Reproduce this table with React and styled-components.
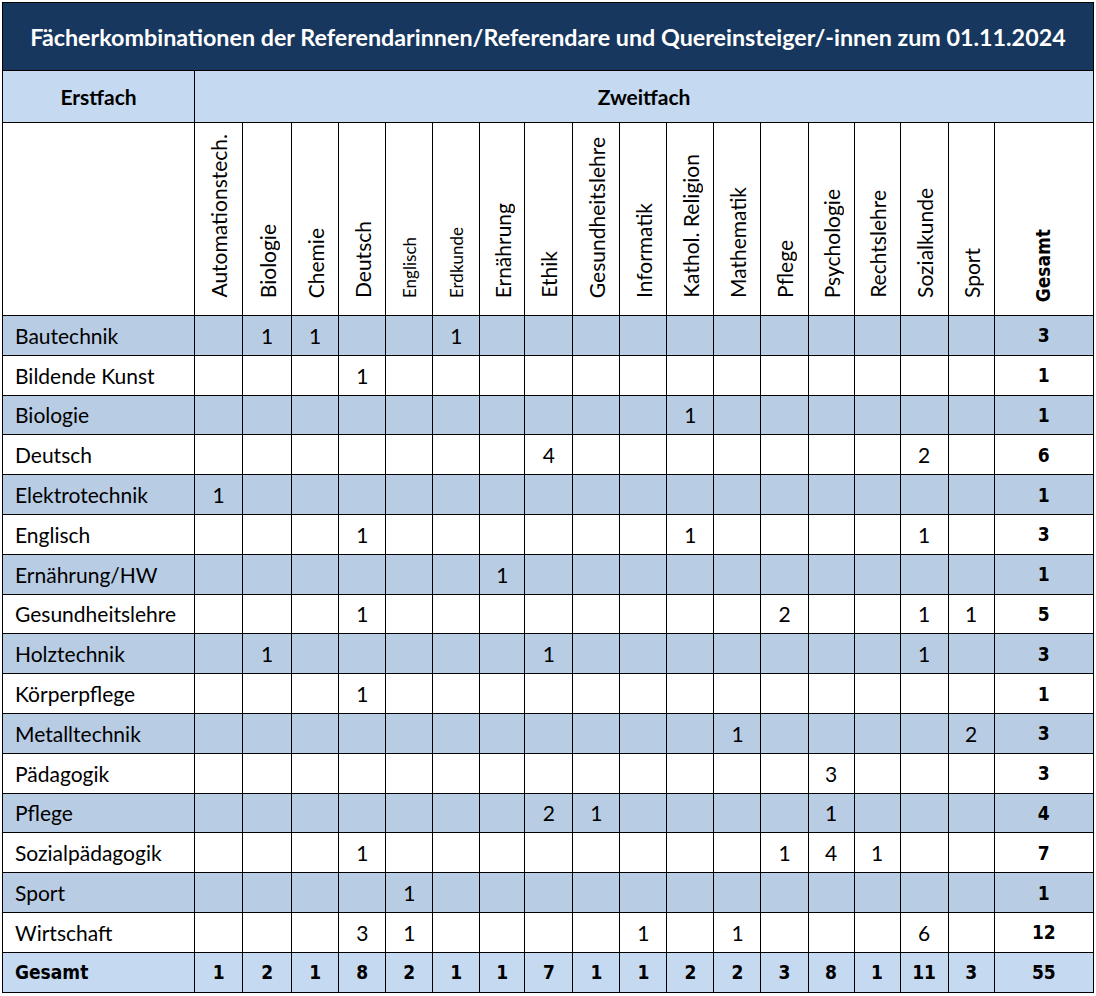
import React from "react";
import styled, { createGlobalStyle, css } from "styled-components";

const GlobalStyle = createGlobalStyle`
  html, body { margin: 0; padding: 0; background: #ffffff; }
  body { font-family: Lato, "Open Sans", sans-serif; color: #000; }
`;

const Page = styled.div`
  padding: 2px 0 0 2px;
`;

const Table = styled.table`
  border-collapse: collapse;
  table-layout: fixed;
  width: 1092px;
  border: 1px solid #000;
  font-family: Lato, "Open Sans", sans-serif;
`;

const narrowBold = css`
  font-family: "Liberation Sans Narrow", "DejaVu Sans Condensed", "Liberation Sans", sans-serif;
  font-weight: 700;
  font-size: 19px;
`;

const TitleCell = styled.th`
  height: 67px;
  background: #17375e;
  color: #ffffff;
  font-size: 23.3px;
  font-weight: 700;
  text-align: center;
  border: 1px solid #000;
  padding: 0;
  white-space: nowrap;
`;

const GroupCell = styled.th`
  height: 51px;
  background: #c5d9f1;
  font-size: 21px;
  font-weight: 700;
  text-align: center;
  border: 1px solid #000;
  padding: 0;
`;

const BlankHead = styled.th`
  height: 192px;
  background: #fff;
  border: 1px solid #000;
  padding: 0;
`;

const VertHead = styled.th`
  background: #fff;
  border: 1px solid #000;
  padding: 0 0 ${(p) => (p.$bold ? "10px" : "14px")} 0;
  vertical-align: bottom;
  text-align: center;
`;

const VertText = styled.span`
  display: inline-block;
  writing-mode: vertical-rl;
  transform: rotate(180deg);
  white-space: nowrap;
  font-size: ${(p) => (p.$small ? "17px" : "21px")};
  font-weight: 400;
  line-height: 1;
  ${(p) => p.$bold && narrowBold}
`;

const Row = styled.tr`
  height: 39.8px;
  background: ${(p) => p.$bg};
`;

const LabelCell = styled.td`
  border: 1px solid #000;
  padding: 0 0 0 12px;
  font-size: 21px;
  white-space: nowrap;
  ${(p) => p.$bold && narrowBold}
`;

const NumCell = styled.td`
  border: 1px solid #000;
  padding: 0;
  text-align: center;
  font-size: 21px;
  ${(p) => p.$bold && narrowBold}
`;

const columns = [
  { name: "Automationstech." },
  { name: "Biologie" },
  { name: "Chemie" },
  { name: "Deutsch" },
  { name: "Englisch", small: true },
  { name: "Erdkunde", small: true },
  { name: "Ernährung" },
  { name: "Ethik" },
  { name: "Gesundheitslehre" },
  { name: "Informatik" },
  { name: "Kathol. Religion" },
  { name: "Mathematik" },
  { name: "Pflege" },
  { name: "Psychologie" },
  { name: "Rechtslehre" },
  { name: "Sozialkunde" },
  { name: "Sport" },
];

const colWidths = [48, 49, 47, 47, 47, 47, 45, 48, 47, 47, 47, 47, 47, 46, 46, 48, 46];

const rows = [
  ["Bautechnik", { 1: 1, 2: 1, 5: 1 }],
  ["Bildende Kunst", { 3: 1 }],
  ["Biologie", { 10: 1 }],
  ["Deutsch", { 7: 4, 15: 2 }],
  ["Elektrotechnik", { 0: 1 }],
  ["Englisch", { 3: 1, 10: 1, 15: 1 }],
  ["Ernährung/HW", { 6: 1 }],
  ["Gesundheitslehre", { 3: 1, 12: 2, 15: 1, 16: 1 }],
  ["Holztechnik", { 1: 1, 7: 1, 15: 1 }],
  ["Körperpflege", { 3: 1 }],
  ["Metalltechnik", { 11: 1, 16: 2 }],
  ["Pädagogik", { 13: 3 }],
  ["Pflege", { 7: 2, 8: 1, 13: 1 }],
  ["Sozialpädagogik", { 3: 1, 12: 1, 13: 4, 14: 1 }],
  ["Sport", { 4: 1 }],
  ["Wirtschaft", { 3: 3, 4: 1, 9: 1, 11: 1, 15: 6 }],
];

export default function App() {
  const colTotals = columns.map((_, i) =>
    rows.reduce((s, [, v]) => s + (v[i] || 0), 0)
  );
  const grand = colTotals.reduce((a, b) => a + b, 0);

  return (
    <Page>
      <GlobalStyle />
      <Table>
        <colgroup>
          <col style={{ width: 192 }} />
          {colWidths.map((w, i) => (
            <col key={i} style={{ width: w }} />
          ))}
          <col style={{ width: 99 }} />
        </colgroup>
        <thead>
          <tr>
            <TitleCell colSpan={19}>
              Fächerkombinationen der Referendarinnen/Referendare und Quereinsteiger/-innen zum 01.11.2024
            </TitleCell>
          </tr>
          <tr>
            <GroupCell>Erstfach</GroupCell>
            <GroupCell colSpan={18}>Zweitfach</GroupCell>
          </tr>
          <tr>
            <BlankHead />
            {columns.map((c) => (
              <VertHead key={c.name}>
                <VertText $small={c.small}>{c.name}</VertText>
              </VertHead>
            ))}
            <VertHead $bold>
              <VertText $bold>Gesamt</VertText>
            </VertHead>
          </tr>
        </thead>
        <tbody>
          {rows.map(([label, vals], r) => {
            const total = Object.values(vals).reduce((a, b) => a + b, 0);
            return (
              <Row key={label} $bg={r % 2 === 0 ? "#b8cce4" : "#ffffff"}>
                <LabelCell>{label}</LabelCell>
                {columns.map((c, i) => (
                  <NumCell key={c.name}>{vals[i] || ""}</NumCell>
                ))}
                <NumCell $bold>{total}</NumCell>
              </Row>
            );
          })}
          <Row $bg="#c5d9f1">
            <LabelCell $bold>Gesamt</LabelCell>
            {colTotals.map((t, i) => (
              <NumCell key={i} $bold>
                {t}
              </NumCell>
            ))}
            <NumCell $bold>{grand}</NumCell>
          </Row>
        </tbody>
      </Table>
    </Page>
  );
}
